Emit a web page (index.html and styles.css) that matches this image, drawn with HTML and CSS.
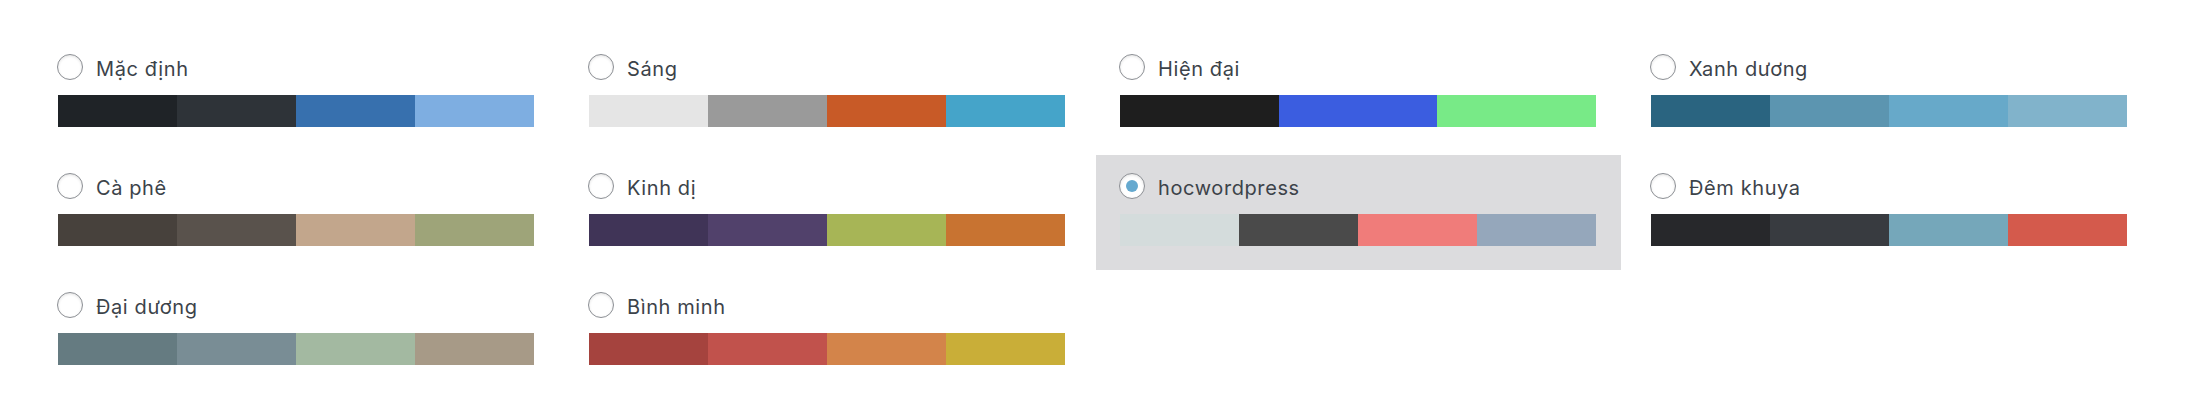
FILE: index.html
```html
<!DOCTYPE html>
<html lang="vi">
<head>
<meta charset="utf-8">
<title>Bảng màu quản trị</title>
<link rel="stylesheet" href="styles.css">
</head>
<body>
<div class="picker">
  <div class="option">
    <label class="label"><span class="radio"></span><span class="name">Mặc định</span></label>
    <div class="palette"><span style="background:#1f2327"></span><span style="background:#2e3338"></span><span style="background:#3770ae"></span><span style="background:#7eaee1"></span></div>
  </div>
  <div class="option">
    <label class="label"><span class="radio"></span><span class="name">Sáng</span></label>
    <div class="palette"><span style="background:#e5e5e5"></span><span style="background:#9a9a9a"></span><span style="background:#c85a27"></span><span style="background:#45a4c9"></span></div>
  </div>
  <div class="option">
    <label class="label"><span class="radio"></span><span class="name">Hiện đại</span></label>
    <div class="palette"><span style="background:#1e1e1e"></span><span style="background:#3b5de0"></span><span style="background:#78ea87"></span></div>
  </div>
  <div class="option">
    <label class="label"><span class="radio"></span><span class="name">Xanh dương</span></label>
    <div class="palette"><span style="background:#2a6480"></span><span style="background:#5c95b0"></span><span style="background:#67a9c9"></span><span style="background:#81b3cb"></span></div>
  </div>
  <div class="option">
    <label class="label"><span class="radio"></span><span class="name">Cà phê</span></label>
    <div class="palette"><span style="background:#47413c"></span><span style="background:#59524c"></span><span style="background:#c2a68c"></span><span style="background:#9ea479"></span></div>
  </div>
  <div class="option">
    <label class="label"><span class="radio"></span><span class="name">Kinh dị</span></label>
    <div class="palette"><span style="background:#403457"></span><span style="background:#51416b"></span><span style="background:#a7b556"></span><span style="background:#c87331"></span></div>
  </div>
  <div class="option selected">
    <label class="label"><span class="radio checked"></span><span class="name">hocwordpress</span></label>
    <div class="palette"><span style="background:#d4dcdc"></span><span style="background:#4a4a4a"></span><span style="background:#f07c7a"></span><span style="background:#95a7bb"></span></div>
  </div>
  <div class="option">
    <label class="label"><span class="radio"></span><span class="name">Đêm khuya</span></label>
    <div class="palette"><span style="background:#27282b"></span><span style="background:#383b40"></span><span style="background:#75a7ba"></span><span style="background:#d45a4c"></span></div>
  </div>
  <div class="option">
    <label class="label"><span class="radio"></span><span class="name">Đại dương</span></label>
    <div class="palette"><span style="background:#657b81"></span><span style="background:#798d95"></span><span style="background:#a3b9a1"></span><span style="background:#a79a87"></span></div>
  </div>
  <div class="option">
    <label class="label"><span class="radio"></span><span class="name">Bình minh</span></label>
    <div class="palette"><span style="background:#a5433e"></span><span style="background:#c1524c"></span><span style="background:#d3844a"></span><span style="background:#c9ae38"></span></div>
  </div>
</div>
</body>
</html>
```

FILE: styles.css
```css
html, body {
  margin: 0;
  background: #ffffff;
}
body {
  font-family: Inter, "Noto Sans", "Liberation Sans", sans-serif;
  color: #3c434a;
}
.picker {
  display: grid;
  grid-template-columns: repeat(4, 525px);
  column-gap: 6px;
  row-gap: 4px;
  padding: 36px 0 0 34px;
}
.option {
  height: 115px;
  box-sizing: border-box;
  padding: 18px 25px 24px 23px;
  display: flex;
  flex-direction: column;
  gap: 16px;
}
.option.selected {
  background: #dcdcde;
}
.label {
  display: flex;
  align-items: flex-start;
  gap: 13px;
  height: 25px;
}
.radio {
  width: 26px;
  height: 26px;
  box-sizing: border-box;
  border: 1.4px solid #8c8f94;
  border-radius: 50%;
  background: #ffffff;
  box-shadow: inset 0 1px 3px rgba(0, 0, 0, 0.12);
  display: flex;
  align-items: center;
  justify-content: center;
  flex: none;
}
.radio.checked::before {
  content: "";
  width: 12px;
  height: 12px;
  border-radius: 50%;
  background: #65a9cf;
}
.name {
  font-size: 20px;
  line-height: 25px;
  letter-spacing: 0.6px;
  padding-top: 3px;
}
.palette {
  display: flex;
  height: 32px;
  margin-left: 1px;
}
.palette span {
  flex: 1;
}
```
